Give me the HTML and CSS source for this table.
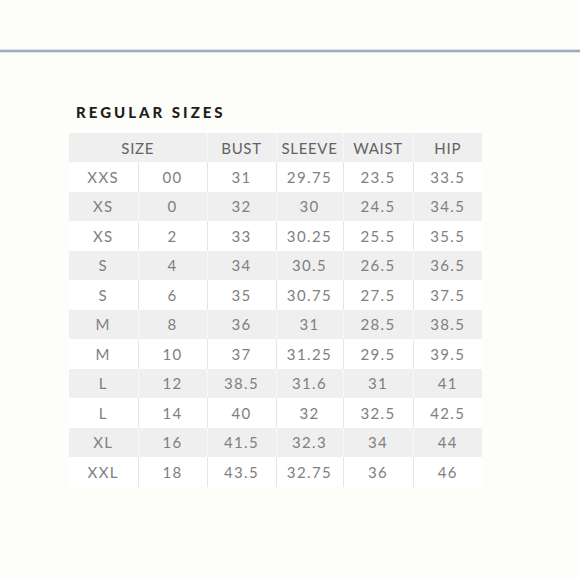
FILE: index.html
```html
<!DOCTYPE html>
<html>
<head>
<meta charset="utf-8">
<link rel="stylesheet" href="styles.css">
</head>
<body>
<div class="rule"></div>
<div class="content">
  <h1 class="title">REGULAR SIZES</h1>
  <table class="chart">
    <colgroup>
      <col class="c1"><col class="c2"><col class="c3"><col class="c4"><col class="c5"><col class="c6">
    </colgroup>
    <thead>
      <tr class="shade"><th colspan="2">SIZE</th><th>BUST</th><th>SLEEVE</th><th>WAIST</th><th>HIP</th></tr>
    </thead>
    <tbody>
      <tr><td>XXS</td><td>00</td><td>31</td><td>29.75</td><td>23.5</td><td>33.5</td></tr>
      <tr class="shade"><td>XS</td><td>0</td><td>32</td><td>30</td><td>24.5</td><td>34.5</td></tr>
      <tr><td>XS</td><td>2</td><td>33</td><td>30.25</td><td>25.5</td><td>35.5</td></tr>
      <tr class="shade"><td>S</td><td>4</td><td>34</td><td>30.5</td><td>26.5</td><td>36.5</td></tr>
      <tr><td>S</td><td>6</td><td>35</td><td>30.75</td><td>27.5</td><td>37.5</td></tr>
      <tr class="shade"><td>M</td><td>8</td><td>36</td><td>31</td><td>28.5</td><td>38.5</td></tr>
      <tr><td>M</td><td>10</td><td>37</td><td>31.25</td><td>29.5</td><td>39.5</td></tr>
      <tr class="shade"><td>L</td><td>12</td><td>38.5</td><td>31.6</td><td>31</td><td>41</td></tr>
      <tr><td>L</td><td>14</td><td>40</td><td>32</td><td>32.5</td><td>42.5</td></tr>
      <tr class="shade"><td>XL</td><td>16</td><td>41.5</td><td>32.3</td><td>34</td><td>44</td></tr>
      <tr><td>XXL</td><td>18</td><td>43.5</td><td>32.75</td><td>36</td><td>46</td></tr>
    </tbody>
  </table>
</div>
</body>
</html>
```
FILE: styles.css
```css
html, body {
  margin: 0;
  padding: 0;
  background: #fdfdfa;
}
body {
  width: 580px;
  height: 580px;
  overflow: hidden;
  font-family: Lato, "Noto Sans", sans-serif;
}
.rule {
  margin-top: 50px;
  height: 2px;
  background: #a3aaba;
  box-shadow: 0 -1px 0 #d9e2f2, 0 1px 0 #dfe6f4;
}
.content {
  padding: 52px 0 0 69px;
}
.title {
  margin: 0 0 13px 7px;
  font-size: 15px;
  line-height: 16px;
  font-weight: 900;
  letter-spacing: 3px;
  color: #1e1e1e;
}
.chart {
  border-collapse: collapse;
  table-layout: fixed;
  width: 413px;
  background: #ffffff;
}
.c1, .c2, .c3 { width: 69px; }
.c4 { width: 67px; }
.c5 { width: 70px; }
.c6 { width: 69px; }
.chart th, .chart td {
  height: 29.5px;
  padding: 0;
  text-align: center;
  font-size: 15px;
  font-weight: 400;
  letter-spacing: 1.4px;
  color: #808080;
  border-left: 1px solid #e6e6e6;
}
.chart th {
  height: 29px;
  color: #626262;
  letter-spacing: 0.7px;
}
.chart tr > :first-child {
  border-left: none;
}
.chart tr.shade th, .chart tr.shade td {
  background: #efefef;
  border-left-color: #f8f8f8;
}
.chart tr.shade > :first-child {
  border-left: none;
}
```
